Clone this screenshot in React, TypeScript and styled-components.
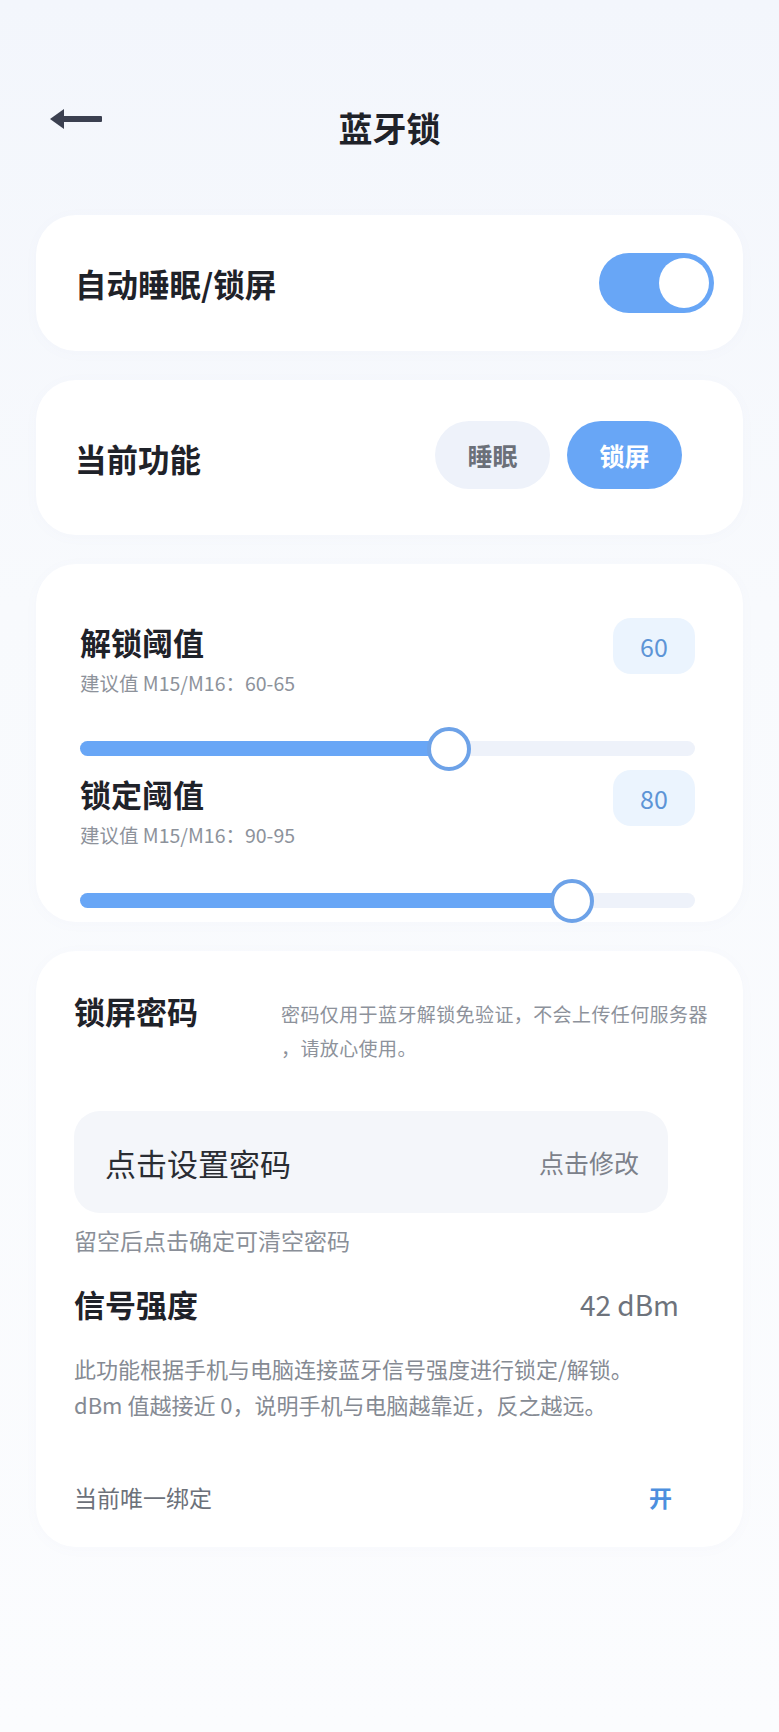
import styled, { createGlobalStyle } from "styled-components";
import { FC } from "react";

const GlobalStyle = createGlobalStyle`
  html, body {
    margin: 0;
    padding: 0;
  }
  body {
    font-family: "Noto Sans CJK SC", "Noto Sans", sans-serif;
    background: linear-gradient(180deg, #f3f6fc 0%, #f8fafd 35%, #fbfcfe 100%);
    color: #1f2229;
  }
`;

const Page = styled.div`
  min-height: 1732px;
  padding-top: 106px;
  box-sizing: border-box;
`;

const Header = styled.header`
  display: grid;
  grid-template-columns: 1fr auto 1fr;
  align-items: start;
  height: 44px;
`;

const BackButton = styled.div`
  padding-left: 50px;
  padding-top: 2px;
  display: flex;
`;

const Title = styled.h1`
  margin: 0;
  font-size: 34px;
  line-height: 44px;
  font-weight: 700;
  color: #1f2229;
`;

const Stack = styled.main`
  display: flex;
  flex-direction: column;
  gap: 29px;
  margin: 65px 36px 0;
`;

const Card = styled.section`
  background: #ffffff;
  border-radius: 40px;
  box-shadow: 0 2px 14px rgba(120, 140, 180, 0.03);
`;

const RowCard = styled(Card)<{ $height: number; $right: number }>`
  height: ${(p) => p.$height}px;
  display: flex;
  align-items: center;
  justify-content: space-between;
  padding: 0 ${(p) => p.$right}px 0 39px;
`;

const RowLabel = styled.span`
  font-size: 31.5px;
  font-weight: 600;
  line-height: 40px;
  color: #1f2229;
`;

const Toggle = styled.div<{ $on: boolean }>`
  width: 115px;
  height: 60px;
  box-sizing: border-box;
  padding: 5px;
  border-radius: 30px;
  background: ${(p) => (p.$on ? "#68a6f6" : "#dfe4ec")};
  display: flex;
  justify-content: ${(p) => (p.$on ? "flex-end" : "flex-start")};
`;

const Knob = styled.div`
  width: 50px;
  height: 50px;
  border-radius: 50%;
  background: #ffffff;
`;

const Pills = styled.div`
  display: flex;
  gap: 17px;
  margin-top: -6px;
`;

const Pill = styled.div<{ $active: boolean }>`
  width: 115px;
  height: 68px;
  border-radius: 34px;
  display: flex;
  align-items: center;
  justify-content: center;
  font-size: 25px;
  font-weight: 600;
  background: ${(p) => (p.$active ? "#68a6f6" : "#eef2fa")};
  color: ${(p) => (p.$active ? "#ffffff" : "#6b7079")};
`;

const SliderCard = styled(Card)`
  padding: 54px 48px 14px 44px;
  display: flex;
  flex-direction: column;
  gap: 14px;
`;

const SliderBlock = styled.div`
  display: flex;
  flex-direction: column;
`;

const SliderHead = styled.div`
  display: flex;
  justify-content: space-between;
  align-items: flex-start;
`;

const SliderText = styled.div`
  padding-top: 4px;
  display: flex;
  flex-direction: column;
  gap: 9px;
`;

const SliderTitle = styled.div`
  font-size: 31px;
  font-weight: 700;
  line-height: 40px;
  color: #1f2229;
`;

const Hint = styled.div`
  font-size: 19.5px;
  line-height: 24px;
  color: #8d929b;
`;

const ValueBadge = styled.div`
  width: 82px;
  height: 56px;
  border-radius: 18px;
  background: #ebf4fe;
  color: #5d94d6;
  font-size: 25px;
  display: flex;
  align-items: center;
  justify-content: center;
`;

const Track = styled.div`
  position: relative;
  margin-top: 46px;
  height: 15px;
  border-radius: 8px;
  background: #eef2fa;
`;

const Fill = styled.div`
  height: 100%;
  border-radius: 8px;
  background: #68a6f6;
`;

const Thumb = styled.div`
  position: absolute;
  top: 50%;
  width: 44px;
  height: 44px;
  box-sizing: border-box;
  border-radius: 50%;
  border: 4px solid #6da2e8;
  background: #ffffff;
  transform: translate(-50%, -50%);
`;

const InfoCard = styled(Card)`
  padding: 40px 0 34px 38px;
  display: flex;
  flex-direction: column;
`;

const PasswordHead = styled.div`
  display: grid;
  grid-template-columns: 207px 1fr;
  align-items: start;
`;

const SectionTitle = styled.div`
  font-size: 31px;
  font-weight: 700;
  line-height: 40px;
  color: #1f2229;
`;

const Notice = styled.div`
  margin-top: 6px;
  font-size: 19px;
  letter-spacing: 0.4px;
  line-height: 34px;
  color: #8d929b;
`;

const PasswordField = styled.div`
  margin-top: 46px;
  width: 594px;
  height: 102px;
  box-sizing: border-box;
  border-radius: 26px;
  background: #f4f6fa;
  padding: 0 29px 0 31px;
  display: flex;
  align-items: center;
  justify-content: space-between;
`;

const FieldText = styled.span`
  font-size: 31px;
  color: #2a2d33;
`;

const FieldAction = styled.span`
  font-size: 25px;
  color: #7c818a;
`;

const SmallNote = styled.div`
  margin-top: 11px;
  font-size: 23px;
  line-height: 32px;
  color: #8a8f98;
`;

const SpreadRow = styled.div<{ $top: number; $right: number }>`
  margin-top: ${(p) => p.$top}px;
  padding-right: ${(p) => p.$right}px;
  display: flex;
  align-items: center;
  justify-content: space-between;
`;

const Signal = styled.span`
  font-size: 28px;
  line-height: 40px;
  color: #6e737c;
`;

const Description = styled.div`
  margin-top: 26px;
  font-size: 22px;
  line-height: 36px;
  color: #858a93;
`;

const Muted = styled.span`
  font-size: 23px;
  line-height: 32px;
  color: #6c717a;
`;

const LinkText = styled.span`
  font-size: 23px;
  line-height: 32px;
  font-weight: 600;
  color: #4d8fde;
`;

interface ThresholdProps {
  title: string;
  hint: string;
  value: number;
}

const Threshold: FC<ThresholdProps> = ({ title, hint, value }) => {
  return (
    <SliderBlock>
      <SliderHead>
        <SliderText>
          <SliderTitle>{title}</SliderTitle>
          <Hint>{hint}</Hint>
        </SliderText>
        <ValueBadge>{value}</ValueBadge>
      </SliderHead>
      <Track>
        <Fill style={{ width: `${value}%` }} />
        <Thumb style={{ left: `${value}%` }} />
      </Track>
    </SliderBlock>
  );
};

const BackArrow = () => (
  <svg width="52" height="22" viewBox="0 0 52 22">
    <path d="M0 11 L14 1 L14 21 Z" fill="#3b4050" />
    <rect x="12" y="8" width="40" height="6" rx="1" fill="#3b4050" />
  </svg>
);

export default function App() {
  return (
    <>
      <GlobalStyle />
      <Page>
        <Header>
          <BackButton>
            <BackArrow />
          </BackButton>
          <Title>蓝牙锁</Title>
          <div />
        </Header>
        <Stack>
          <RowCard $height={136} $right={29}>
            <RowLabel>自动睡眠/锁屏</RowLabel>
            <Toggle $on>
              <Knob />
            </Toggle>
          </RowCard>

          <RowCard $height={155} $right={61}>
            <RowLabel>当前功能</RowLabel>
            <Pills>
              <Pill $active={false}>睡眠</Pill>
              <Pill $active>锁屏</Pill>
            </Pills>
          </RowCard>

          <SliderCard>
            <Threshold title="解锁阈值" hint="建议值 M15/M16：60-65" value={60} />
            <Threshold title="锁定阈值" hint="建议值 M15/M16：90-95" value={80} />
          </SliderCard>

          <InfoCard>
            <PasswordHead>
              <SectionTitle>锁屏密码</SectionTitle>
              <Notice>
                <div>密码仅用于蓝牙解锁免验证，不会上传任何服务器</div>
                <div>，请放心使用。</div>
              </Notice>
            </PasswordHead>
            <PasswordField>
              <FieldText>点击设置密码</FieldText>
              <FieldAction>点击修改</FieldAction>
            </PasswordField>
            <SmallNote>留空后点击确定可清空密码</SmallNote>
            <SpreadRow $top={28} $right={64}>
              <SectionTitle>信号强度</SectionTitle>
              <Signal>42 dBm</Signal>
            </SpreadRow>
            <Description>
              <div>此功能根据手机与电脑连接蓝牙信号强度进行锁定/解锁。</div>
              <div>dBm 值越接近 0，说明手机与电脑越靠近，反之越远。</div>
            </Description>
            <SpreadRow $top={59} $right={71}>
              <Muted>当前唯一绑定</Muted>
              <LinkText>开</LinkText>
            </SpreadRow>
          </InfoCard>
        </Stack>
      </Page>
    </>
  );
}
